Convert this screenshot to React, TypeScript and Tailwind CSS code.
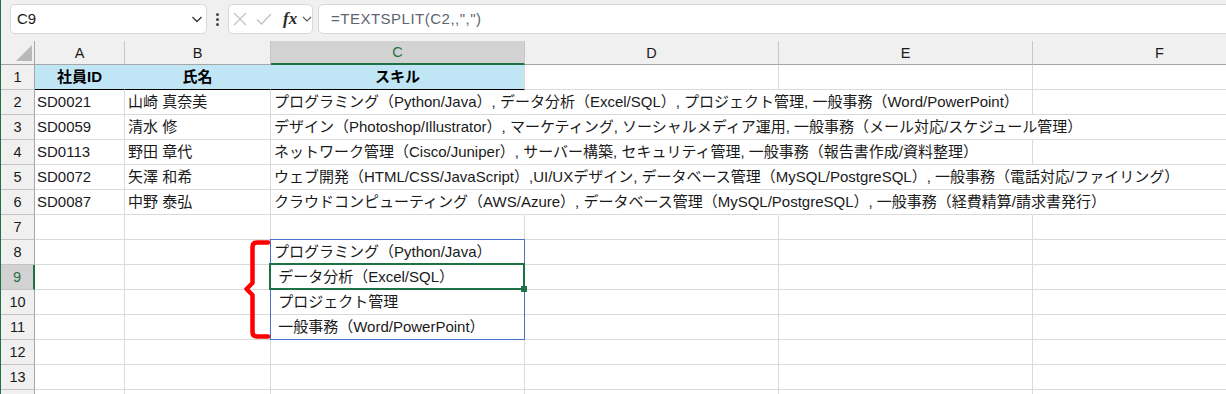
import React from "react";
import clsx from "clsx";

type ColKey = "A" | "B" | "C" | "D" | "E" | "F";
const COLS: ColKey[] = ["A", "B", "C", "D", "E", "F"];
const WIDTHS: Record<ColKey, string> = {
  A: "w-[90px]",
  B: "w-[146px]",
  C: "w-[254px]",
  D: "w-[254px]",
  E: "w-[254px]",
  F: "w-[254px]",
};

type RowData = {
  A?: string;
  B?: string;
  C?: string;
  hide?: ColKey[];
};

const DATA: Record<number, RowData> = {
  2: {
    A: "SD0021",
    B: "山崎 真奈美",
    C: "プログラミング（Python/Java）, データ分析（Excel/SQL）, プロジェクト管理, 一般事務（Word/PowerPoint）",
    hide: ["C", "D"],
  },
  3: {
    A: "SD0059",
    B: "清水 修",
    C: "デザイン（Photoshop/Illustrator）, マーケティング, ソーシャルメディア運用, 一般事務（メール対応/スケジュール管理）",
    hide: ["C", "D", "E"],
  },
  4: {
    A: "SD0113",
    B: "野田 章代",
    C: "ネットワーク管理（Cisco/Juniper）, サーバー構築, セキュリティ管理, 一般事務（報告書作成/資料整理）",
    hide: ["C", "D"],
  },
  5: {
    A: "SD0072",
    B: "矢澤 和希",
    C: "ウェブ開発（HTML/CSS/JavaScript）,UI/UXデザイン, データベース管理（MySQL/PostgreSQL）, 一般事務（電話対応/ファイリング）",
    hide: ["C", "D", "E"],
  },
  6: {
    A: "SD0087",
    B: "中野 泰弘",
    C: "クラウドコンピューティング（AWS/Azure）, データベース管理（MySQL/PostgreSQL）, 一般事務（経費精算/請求書発行）",
    hide: ["C", "D", "E"],
  },
  8: { C: "プログラミング（Python/Java）" },
  9: { C: " データ分析（Excel/SQL）" },
  10: { C: " プロジェクト管理" },
  11: { C: " 一般事務（Word/PowerPoint）" },
};

const FONT = { fontFamily: '"Liberation Sans", "Noto Sans CJK JP", sans-serif' };

function RowHeader({ n }: { n: number }) {
  const sel = n === 9;
  return (
    <div
      className={clsx(
        "w-[34px] h-full shrink-0 flex items-center justify-center border-b border-b-[#c4c4c4] text-[14.5px] leading-[18px]",
        sel
          ? "bg-[#d2d2d2] border-r-2 border-r-[#1e7145] text-[#1e7145]"
          : "bg-[#f0f0f0] border-r border-r-[#a6a6a6] text-[#1a1a1a]"
      )}
    >
      {n <= 13 ? n : ""}
    </div>
  );
}

function Row({ n }: { n: number }) {
  const d = DATA[n] ?? {};
  const header = n === 1;
  return (
    <div className="flex h-[25px] shrink-0">
      <RowHeader n={n} />
      {COLS.map((c) => {
        const hide = d.hide?.includes(c);
        if (header && (c === "A" || c === "B" || c === "C")) {
          const label = c === "A" ? "社員ID" : c === "B" ? "氏名" : "スキル";
          return (
            <div
              key={c}
              className={clsx(
                "shrink-0 h-full flex items-center justify-center bg-[#c0e6f5] border-b border-b-[#000] border-r font-bold text-[15px] leading-[18px] text-[#000]",
                WIDTHS[c],
                c === "C" ? "border-r-[#dadada]" : "border-r-transparent"
              )}
            >
              {label}
            </div>
          );
        }
        const text = (d as Record<string, string | undefined>)[c];
        return (
          <div
            key={c}
            className={clsx(
              "shrink-0 h-full flex items-center border-b border-b-[#dadada] border-r whitespace-pre text-[15px] leading-[18px] text-[#1a1a1a]",
              WIDTHS[c],
              hide ? "border-r-transparent" : "border-r-[#dadada]",
              c === "A" ? "pl-[2px]" : "pl-[3px]"
            )}
          >
            {text ? <span className="whitespace-pre">{text}</span> : null}
          </div>
        );
      })}
    </div>
  );
}

function ColHeaderRow() {
  return (
    <div className="flex h-[24px] shrink-0 bg-[#f0f0f0]">
      <div className="w-[34px] h-full shrink-0 border-r border-r-[#a6a6a6] border-b border-b-[#a6a6a6] relative">
        <svg className="absolute left-0 top-0" width="34" height="24" viewBox="0 0 34 24">
          <polygon points="31,4 31,20 15,20" fill="#b8b8b8" />
        </svg>
      </div>
      {COLS.map((c) => {
        const sel = c === "C";
        return (
          <div
            key={c}
            className={clsx(
              "shrink-0 h-full flex items-center justify-center border-r border-r-[#c6c6c6] text-[14.5px] leading-[18px]",
              WIDTHS[c],
              sel
                ? "bg-[#d2d2d2] border-b-2 border-b-[#1e7145] text-[#1e7145]"
                : "border-b border-b-[#a6a6a6] text-[#1a1a1a]"
            )}
          >
            {c}
          </div>
        );
      })}
    </div>
  );
}

function TopBar() {
  return (
    <div className="h-[41px] shrink-0 flex items-start pt-[4px] pl-[9px] bg-[#f0f0f0]">
      <div className="w-[197px] h-[30px] shrink-0 bg-white border border-[#d8d8d8] rounded-[5px] flex items-center justify-between pl-[6px] pr-[3px]">
        <span className="text-[15px] text-[#1a1a1a] leading-[18px]">C9</span>
        <svg width="12" height="12" viewBox="0 0 12 12">
          <polyline points="1.5,4 6,8.5 10.5,4" fill="none" stroke="#333" strokeWidth="1.3" />
        </svg>
      </div>
      <div className="w-[21px] h-[30px] shrink-0 flex flex-col items-center justify-center gap-[2px]">
        <span className="w-[3px] h-[3px] rounded-full bg-[#444]" />
        <span className="w-[3px] h-[3px] rounded-full bg-[#444]" />
        <span className="w-[3px] h-[3px] rounded-full bg-[#444]" />
      </div>
      <div className="w-[85px] h-[30px] shrink-0 bg-white border border-[#d8d8d8] rounded-[5px] flex items-center pl-[4px]">
        <svg width="14" height="14" viewBox="0 0 14 14" className="shrink-0">
          <path d="M1 1 L13 13 M13 1 L1 13" stroke="#c2c2c2" strokeWidth="1.3" fill="none" />
        </svg>
        <svg width="16" height="14" viewBox="0 0 16 14" className="shrink-0 ml-[9px]">
          <polyline points="1,7.5 5.5,12 15,2" stroke="#c2c2c2" strokeWidth="1.3" fill="none" />
        </svg>
        <span
          className="ml-[11px] italic font-bold text-[17px] leading-[18px] text-[#2a2a2a]"
          style={{ fontFamily: '"Liberation Serif", serif' }}
        >
          fx
        </span>
        <svg width="10" height="10" viewBox="0 0 10 10" className="shrink-0 ml-[5px]">
          <polyline points="1,3 5,7 9,3" fill="none" stroke="#555" strokeWidth="1.1" />
        </svg>
      </div>
      <div className="ml-[5px] mr-[-10px] flex-1 h-[30px] bg-white border border-[#d8d8d8] rounded-[5px] flex items-center pl-[12px]">
        <span className="text-[15px] leading-[18px] tracking-[0.5px] text-[#5e6570] whitespace-pre">=TEXTSPLIT(C2,,",")</span>
      </div>
    </div>
  );
}

export default function App() {
  const rows = Array.from({ length: 14 }, (_, i) => i + 1);
  return (
    <div className="relative w-[1226px] h-[394px] overflow-hidden flex bg-[#f0f0f0]" style={FONT}>
      <div className="w-px shrink-0 bg-[#1e7145]" />
      <div className="flex-1 flex flex-col min-w-0">
        <TopBar />
        <ColHeaderRow />
        <div className="flex flex-col bg-white">
          {rows.map((n) => (
            <Row key={n} n={n} />
          ))}
        </div>
      </div>

      {/* spill range border */}
      <div className="absolute left-[270px] top-[239px] w-[255px] h-[101px] border border-[#4472c4] pointer-events-none" />
      {/* active cell */}
      <div className="absolute left-[269px] top-[263px] w-[256px] h-[27px] border-2 border-[#1e7145] pointer-events-none" />
      <div className="absolute left-[521px] top-[286px] w-[6px] h-[6px] bg-[#1e7145]" />
      {/* red brace */}
      <svg className="absolute left-[240px] top-[234px]" width="32" height="110" viewBox="0 0 32 110">
        <path
          d="M28 8.5 H17 Q12.5 8.5 12.5 13 V49 L6.5 55 L12.5 61 V98 Q12.5 102.5 17 102.5 H28"
          fill="none"
          stroke="#ff0000"
          strokeWidth="4.5"
          strokeLinejoin="round"
          strokeLinecap="round"
        />
      </svg>
    </div>
  );
}
